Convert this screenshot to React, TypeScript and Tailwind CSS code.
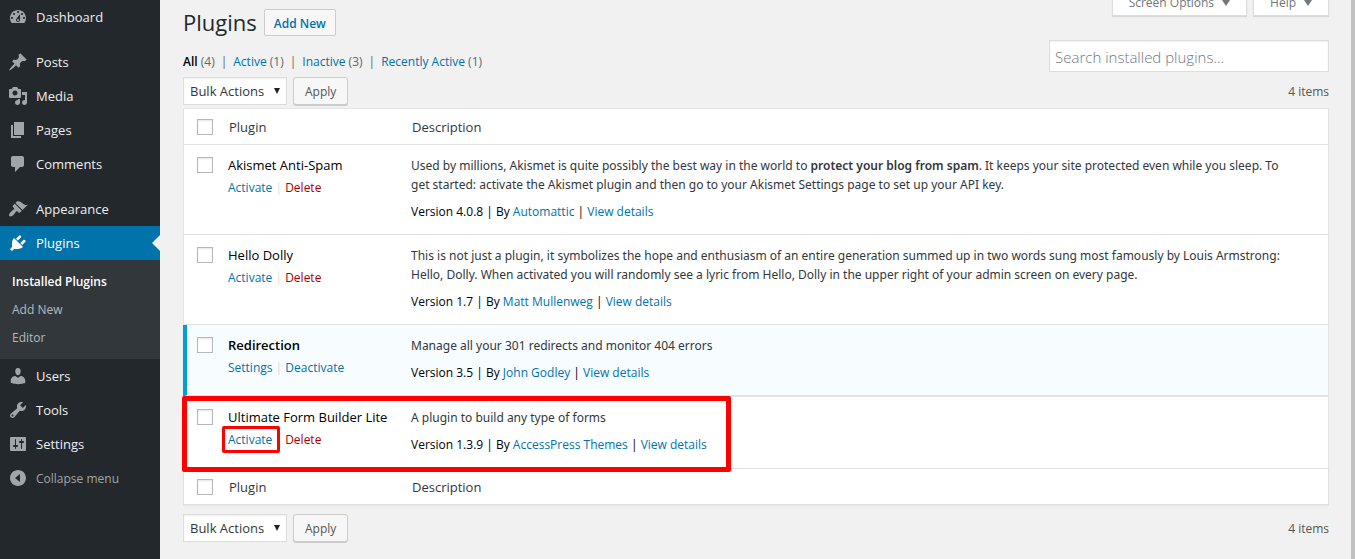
import React from 'react';

interface IconProps {
  d: string;
  className?: string;
}

const Icon: React.FC<IconProps> = ({ d, className = '' }) => (
  <svg viewBox="0 0 20 20" className={`size-5 shrink-0 fill-current ${className}`} aria-hidden="true">
    <path d={d} fillRule="evenodd" />
  </svg>
);

const icons = {
  dashboard:
    'M3.76 16h12.48c1.1-1.37 1.76-3.11 1.76-5 0-4.42-3.58-8-8-8s-8 3.58-8 8c0 1.89.66 3.63 1.76 5zM10 4c.55 0 1 .45 1 1s-.45 1-1 1-1-.45-1-1 .45-1 1-1zM6 6c.55 0 1 .45 1 1s-.45 1-1 1-1-.45-1-1 .45-1 1-1zm8 0c.55 0 1 .45 1 1s-.45 1-1 1-1-.45-1-1 .45-1 1-1zm-5.37 5.55L12 7v6c0 1.1-.9 2-2 2s-2-.9-2-2c0-.57.24-1.08.63-1.45zM4 10c.55 0 1 .45 1 1s-.45 1-1 1-1-.45-1-1 .45-1 1-1zm12 0c.55 0 1 .45 1 1s-.45 1-1 1-1-.45-1-1 .45-1 1-1zm-5 3c0-.55-.45-1-1-1s-1 .45-1 1 .45 1 1 1 1-.45 1-1z',
  posts:
    'M10.44 3.02l1.82-1.82 6.36 6.35-1.83 1.82c-1.05-.68-2.48-.57-3.41.36l-.75.75c-.92.93-1.04 2.35-.35 3.41l-1.83 1.82-2.41-2.41-2.8 2.79c-.42.42-3.38 2.71-3.8 2.29s1.86-3.39 2.28-3.81l2.79-2.79L4.1 9.36l1.83-1.82c1.05.69 2.48.57 3.4-.36l.75-.75c.93-.92 1.05-2.35.36-3.41z',
  media:
    'M13 11V4c0-.55-.45-1-1-1h-1.67L9 1H5L3.67 3H2c-.55 0-1 .45-1 1v7c0 .55.45 1 1 1h10c.55 0 1-.45 1-1zM7 4.5c1.38 0 2.5 1.12 2.5 2.5S8.38 9.5 7 9.5 4.5 8.38 4.5 7 5.62 4.5 7 4.5zM14 6h5v10.5c0 1.38-1.12 2.5-2.5 2.5S14 17.88 14 16.5s1.12-2.5 2.5-2.5c.17 0 .34.02.5.05V9h-3V6zm-4 8.05V13h2v3.5c0 1.38-1.12 2.5-2.5 2.5S7 17.88 7 16.5 8.12 14 9.5 14c.17 0 .34.02.5.05z',
  pages: 'M6 15V2h10v13H6zm-1 1h8v2H3V5h2v11z',
  comments:
    'M5 2h9c1.1 0 2 .9 2 2v7c0 1.1-.9 2-2 2h-2l-5 5v-5H5c-1.1 0-2-.9-2-2V4c0-1.1.9-2 2-2z',
  appearance:
    'M14.48 11.06L7.41 3.99l1.5-1.5c.5-.56 2.3-.47 3.51.32 1.21.8 1.43 1.28 2.91 2.1 1.18.64 2.45 1.26 4.45.85zm-.71.71L6.7 4.7 4.93 6.47c-.39.39-.39 1.02 0 1.41l1.06 1.06c.39.39.39 1.03 0 1.42-.6.6-1.43 1.11-2.21 1.69-.35.26-.7.53-1.01.84C1.43 14.23.4 16.08 1.4 17.07c.99 1 2.84-.03 4.18-1.36.31-.31.58-.66.85-1.02.57-.78 1.08-1.61 1.69-2.21.39-.39 1.02-.39 1.41 0l1.06 1.06c.39.39 1.02.39 1.41 0z',
  plugins:
    'M13.11 4.36L9.87 7.6 8 5.73l3.24-3.24c.35-.34 1.05-.2 1.56.32.52.51.66 1.21.31 1.55zm-8 1.77l.91-1.12 9.01 9.01-1.19.84c-.71.71-2.63 1.16-3.82 1.16H6.14L4.9 17.26c-.59.59-1.54.59-2.12 0-.59-.58-.59-1.53 0-2.12l1.24-1.24v-3.88c0-1.13.4-3.19 1.09-3.89zm7.26 3.97l3.24-3.24c.34-.35 1.04-.21 1.55.31.52.51.66 1.21.31 1.55l-3.24 3.25z',
  users:
    'M10 9.25c-2.27 0-2.73-3.44-2.73-3.44C7 4.02 7.82 2 9.97 2c2.16 0 2.98 2.02 2.71 3.81 0 0-.41 3.44-2.68 3.44zm0 2.57L12.72 10c2.39 0 4.52 2.33 4.52 4.53v2.49s-3.65 1.13-7.24 1.13c-3.65 0-7.24-1.13-7.24-1.13v-2.49c0-2.25 1.94-4.48 4.47-4.48z',
  tools:
    'M16.68 9.77c-1.34 1.34-3.3 1.67-4.95.99l-5.41 6.52c-.99.99-2.59.99-3.58 0s-.99-2.59 0-3.57l6.52-5.42c-.68-1.65-.35-3.61.99-4.95 1.28-1.28 3.12-1.62 4.72-1.06l-2.89 2.89 2.82 2.82 2.86-2.87c.53 1.58.18 3.39-1.08 4.65zM3.81 16.21c.4.39 1.04.39 1.43 0 .4-.4.4-1.04 0-1.43-.39-.4-1.03-.4-1.43 0-.39.39-.39 1.03 0 1.43z',
  settings:
    'M18 16V4c0-.55-.45-1-1-1H3c-.55 0-1 .45-1 1v12c0 .55.45 1 1 1h14c.55 0 1-.45 1-1zM8 11h1c.55 0 1 .45 1 1s-.45 1-1 1H8v1.5c0 .28-.22.5-.5.5s-.5-.22-.5-.5V13H6c-.55 0-1-.45-1-1s.45-1 1-1h1V5.5c0-.28.22-.5.5-.5s.5.22.5.5V11zm5-2h-1c-.55 0-1-.45-1-1s.45-1 1-1h1V5.5c0-.28.22-.5.5-.5s.5.22.5.5V7h1c.55 0 1 .45 1 1s-.45 1-1 1h-1v5.5c0 .28-.22.5-.5.5s-.5-.22-.5-.5V9z',
  collapse:
    'M10 2c4.42 0 8 3.58 8 8s-3.58 8-8 8-8-3.58-8-8 3.58-8 8-8zm2 12V6l-5 4z',
};

interface MenuItemProps {
  icon: string;
  label: string;
  current?: boolean;
}

const MenuItem: React.FC<MenuItemProps> = ({ icon, label, current = false }) => (
  <a
    href="#"
    className={`relative flex h-[34px] items-center gap-2 pl-2 text-[13px] ${
      current ? 'bg-[#0073aa] text-white' : 'text-[#eee]'
    }`}
  >
    <Icon d={icon} className={current ? '' : 'text-[#a0a5aa]'} />
    <span className="pt-0.5">{label}</span>
    {current && (
      <span className="absolute top-[9px] right-0 border-y-8 border-r-8 border-y-transparent border-r-[#f1f1f1]" />
    )}
  </a>
);

const Sidebar: React.FC = () => (
  <nav className="w-40 shrink-0 bg-[#23282d]">
    <MenuItem icon={icons.dashboard} label="Dashboard" />
    <div className="mt-[11px]">
      <MenuItem icon={icons.posts} label="Posts" />
      <MenuItem icon={icons.media} label="Media" />
      <MenuItem icon={icons.pages} label="Pages" />
      <MenuItem icon={icons.comments} label="Comments" />
    </div>
    <div className="mt-[11px]">
      <MenuItem icon={icons.appearance} label="Appearance" />
      <MenuItem icon={icons.plugins} label="Plugins" current />
      <div className="bg-[#32373c] pt-2 pb-[7px] text-[12px] leading-7 text-[#b4b9be]">
        <a href="#" className="block pl-3 font-semibold text-white">Installed Plugins</a>
        <a href="#" className="block pl-3">Add New</a>
        <a href="#" className="block pl-3">Editor</a>
      </div>
      <MenuItem icon={icons.users} label="Users" />
      <MenuItem icon={icons.tools} label="Tools" />
      <MenuItem icon={icons.settings} label="Settings" />
    </div>
    <button className="flex h-[34px] w-full items-center gap-2 pl-2 text-[12px] text-[#a0a5aa]">
      <Icon d={icons.collapse} />
      <span className="pt-0.5">Collapse menu</span>
    </button>
  </nav>
);

const ScreenTab: React.FC<{ label: string }> = ({ label }) => (
  <button className="flex h-7 items-center gap-2 border border-t-0 border-[#ddd] bg-white px-4 pt-0.5 text-[12px] text-[#72777c] shadow-[0_1px_1px_rgba(0,0,0,0.1)]">
    {label}
    <svg viewBox="0 0 8 6" className="h-[6px] w-2 fill-current" aria-hidden="true">
      <path d="M0 0h8L4 6z" />
    </svg>
  </button>
);

const filters = [
  { label: 'Active', count: 1 },
  { label: 'Inactive', count: 3 },
  { label: 'Recently Active', count: 1 },
];

const TableNav: React.FC<{ id: string }> = ({ id }) => (
  <div className="flex items-center">
    <div className="relative">
      <select
        id={id}
        aria-label="Select bulk action"
        className="block h-7 w-[104px] appearance-none border border-[#ddd] bg-white pt-0.5 pl-[6px] text-[13px] text-[#32373c] shadow-[inset_0_1px_2px_rgba(0,0,0,0.07)]"
      >
        <option>Bulk Actions</option>
      </select>
      <svg
        viewBox="0 0 6 6"
        className="pointer-events-none absolute top-[11px] right-[7px] size-[6px] fill-[#222]"
        aria-hidden="true"
      >
        <path d="M0 0h6L3 6z" />
      </svg>
    </div>
    <button className="ml-[6px] h-7 rounded-[3px] border border-[#ccc] bg-[#f7f7f7] px-[11px] pt-0.5 text-[12px] text-[#555] shadow-[0_1px_0_#ccc]">
      Apply
    </button>
    <span className="ml-auto pt-0.5 text-[12px] text-[#555]">4 items</span>
  </div>
);

const Checkbox: React.FC<{ label: string }> = ({ label }) => (
  <input
    type="checkbox"
    aria-label={label}
    className="block size-4 appearance-none border border-[#b4b9be] bg-white shadow-[inset_0_1px_2px_rgba(0,0,0,0.1)]"
  />
);

interface Plugin {
  name: string;
  version: string;
  author: string;
  description: React.ReactNode;
  active?: boolean;
  highlighted?: boolean;
}

const plugins: Plugin[] = [
  {
    name: 'Akismet Anti-Spam',
    version: '4.0.8',
    author: 'Automattic',
    description: (
      <>
        Used by millions, Akismet is quite possibly the best way in the world to{' '}
        <strong className="font-semibold">protect your blog from spam</strong>. It keeps your site protected even
        while you sleep. To get started: activate the Akismet plugin and then go to your Akismet Settings page to
        set up your API key.
      </>
    ),
  },
  {
    name: 'Hello Dolly',
    version: '1.7',
    author: 'Matt Mullenweg',
    description:
      'This is not just a plugin, it symbolizes the hope and enthusiasm of an entire generation summed up in two words sung most famously by Louis Armstrong: Hello, Dolly. When activated you will randomly see a lyric from Hello, Dolly in the upper right of your admin screen on every page.',
  },
  {
    name: 'Redirection',
    version: '3.5',
    author: 'John Godley',
    description: 'Manage all your 301 redirects and monitor 404 errors',
    active: true,
  },
  {
    name: 'Ultimate Form Builder Lite',
    version: '1.3.9',
    author: 'AccessPress Themes',
    description: 'A plugin to build any type of forms',
    highlighted: true,
  },
];

const PluginRow: React.FC<{ plugin: Plugin }> = ({ plugin }) => {
  const { name, version, author, description, active, highlighted } = plugin;
  const line = active ? 'border-b-2 border-b-[#dfe5e8]' : 'border-b border-b-[#e1e1e1]';

  return (
    <tr className={`align-top ${active ? 'bg-[#f7fcfe]' : 'bg-white'}`}>
      <td
        className={`relative pt-3 ${line} ${
          active ? 'border-l-4 border-l-[#00a0d2] pl-[10px]' : 'border-l border-l-[#e5e5e5] pl-[13px]'
        }`}
      >
        <Checkbox label={`Select ${name}`} />
        {highlighted && (
          <span className="pointer-events-none absolute -top-px -left-[2px] z-10 h-[76px] w-[549px] rounded-[2px] border-[5px] border-[#f00]" />
        )}
      </td>
      <td className={`px-[10px] pt-[11px] pb-[13px] ${line}`}>
        <div className={`text-[13px] leading-[19px] whitespace-nowrap text-black ${active ? 'font-semibold' : ''}`}>
          {name}
        </div>
        <div className="mt-[3px] text-[#ddd]">
          <a href="#" className="relative text-[#0073aa]">
            {active ? 'Settings' : 'Activate'}
            {highlighted && (
              <span className="pointer-events-none absolute -inset-y-[5px] -right-2 -left-[6px] z-10 rounded-[2px] border-[3px] border-[#f00]" />
            )}
          </a>
          {' | '}
          <a href="#" className={active ? 'text-[#0073aa]' : 'text-[#a00]'}>
            {active ? 'Deactivate' : 'Delete'}
          </a>
        </div>
      </td>
      <td
        className={`border-r border-r-[#e5e5e5] pt-[11px] pr-9 pl-[10px] ${
          highlighted ? 'pb-[14px]' : 'pb-[13px]'
        } ${line}`}
      >
        <p className="font-['Noto_Sans','Open_Sans',sans-serif]">{description}</p>
        <p className="mt-2 text-black">
          Version {version} | By{' '}
          <a href="#" className="text-[#0073aa]">{author}</a>
          {' | '}
          <a href="#" className="text-[#0073aa]">View details</a>
        </p>
      </td>
    </tr>
  );
};

const HeadingRow: React.FC<{ position: 'top' | 'bottom' }> = ({ position }) => (
  <tr className="h-9 bg-white text-left text-[13px] text-[#32373c]">
    <th className="border-b border-l border-[#e1e1e1] pl-[13px]">
      <Checkbox label={`Select all plugins, ${position}`} />
    </th>
    <th className="border-b border-[#e1e1e1] pt-0.5 pl-[11px] font-normal">Plugin</th>
    <th className="border-r border-b border-[#e1e1e1] pt-0.5 pl-[11px] font-normal">Description</th>
  </tr>
);

const PluginTable: React.FC = () => (
  <table className="w-full table-fixed border-separate border-spacing-0 border-t border-[#e5e5e5] text-[12px] leading-[19px] text-[#32373c] shadow-[0_1px_1px_rgba(0,0,0,0.04)]">
    <colgroup>
      <col className="w-[35px]" />
      <col className="w-[183px]" />
      <col />
    </colgroup>
    <thead>
      <HeadingRow position="top" />
    </thead>
    <tbody>
      {plugins.map((plugin) => (
        <PluginRow key={plugin.name} plugin={plugin} />
      ))}
    </tbody>
    <tfoot>
      <HeadingRow position="bottom" />
    </tfoot>
  </table>
);

export default function App() {
  return (
    <div className="flex min-h-screen overflow-hidden bg-[#f1f1f1] font-['Open_Sans','Noto_Sans',sans-serif]">
      <Sidebar />
      <main className="min-w-0 grow border-r-4 border-[#c1c1c1] pr-[22px] pl-[23px]">
        <div className="flex h-[77px] justify-between">
          <div className="pt-[9px]">
            <div className="flex items-start gap-[7px]">
              <h1 className="text-[22px] leading-[27px] text-[#23282d]">Plugins</h1>
              <a
                href="#"
                className="flex h-[27px] items-center rounded-[2px] border border-[#ccc] bg-[#f7f7f7] px-[9px] pt-0.5 text-[12px] font-semibold text-[#0073aa]"
              >
                Add New
              </a>
            </div>
            <ul className="mt-4 flex text-[12px] leading-5 text-[#666]">
              <li>
                <a href="#" className="font-semibold text-black">All</a> (4)
              </li>
              {filters.map(({ label, count }) => (
                <li key={label}>
                  <span className="px-[6px]">|</span>
                  <a href="#" className="text-[#0073aa]">{label}</a> ({count})
                </li>
              ))}
            </ul>
          </div>
          <div className="-mt-3 flex flex-col items-end">
            <div className="flex gap-[6px]">
              <ScreenTab label="Screen Options" />
              <ScreenTab label="Help" />
            </div>
            <input
              type="search"
              aria-label="Search installed plugins"
              placeholder="Search installed plugins..."
              className="mt-6 h-8 w-[280px] border border-[#ddd] bg-white px-[5px] pt-0.5 text-[15px] font-light placeholder:text-[#72777c] shadow-[inset_0_1px_2px_rgba(0,0,0,0.07)]"
            />
          </div>
        </div>
        <TableNav id="bulk-action-top" />
        <div className="mt-[3px] mb-[9px]">
          <PluginTable />
        </div>
        <TableNav id="bulk-action-bottom" />
      </main>
    </div>
  );
}
